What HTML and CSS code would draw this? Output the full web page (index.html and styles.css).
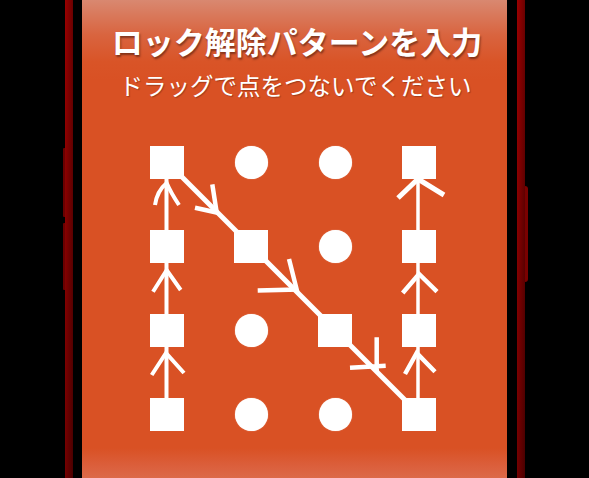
FILE: index.html
```html
<!DOCTYPE html>
<html lang="ja">
<head>
<meta charset="utf-8">
<title>ロック解除パターンを入力</title>
<link rel="stylesheet" href="styles.css">
</head>
<body>
<div class="device">
  <div class="rail rail-left"></div>
  <div class="gap gap-left"></div>
  <main class="screen">
    <h1 class="title">ロック解除パターンを入力</h1>
    <p class="subtitle">ドラッグで点をつないでください</p>
    <div class="pattern">
      <div class="dots">
        <span class="dot square"></span><span class="dot circle"></span><span class="dot circle"></span><span class="dot square"></span>
        <span class="dot square"></span><span class="dot square"></span><span class="dot circle"></span><span class="dot square"></span>
        <span class="dot square"></span><span class="dot circle"></span><span class="dot square"></span><span class="dot square"></span>
        <span class="dot square"></span><span class="dot circle"></span><span class="dot circle"></span><span class="dot square"></span>
      </div>
      <svg class="trace" width="336" height="336" viewBox="0 0 336 336" aria-hidden="true">
        <g fill="none" stroke="#fff" stroke-linecap="butt" stroke-linejoin="miter">
          <line x1="41.5" y1="42" x2="41.5" y2="294" stroke-width="4"/>
          <line x1="293" y1="42" x2="293" y2="294" stroke-width="3.5"/>
          <line x1="42" y1="42" x2="294" y2="294" stroke-width="5"/>
          <path d="M30,85 Q32,71 41.7,63 Q46,73 54,85" stroke-width="4"/>
          <path d="M28,171.7 L41.7,150 L55.7,170" stroke-width="4"/>
          <path d="M26.7,255 L41,233 L59,253" stroke-width="4"/>
          <path d="M273,78 L293,59 L319,75" stroke-width="5"/>
          <path d="M277.7,173 L294,154 L312,171.7" stroke-width="4.5"/>
          <path d="M280,254 L291.7,233 L310,251.7" stroke-width="4.5"/>
          <path d="M87.3,64.3 L91.7,92.5 L70,87.7" stroke-width="4.5"/>
          <path d="M164,139 L171.7,169.5 L132.7,170.5" stroke-width="4.5"/>
          <path d="M251.7,217.3 L251.7,251.7 M225,247.7 L260.7,245.7" stroke-width="4.5"/>
        </g>
      </svg>
    </div>
  </main>
  <div class="gap gap-right"></div>
  <div class="rail rail-right"></div>
</div>
</body>
</html>
```

FILE: styles.css
```css
html, body {
  margin: 0;
  padding: 0;
  background: #000;
}

body {
  width: 589px;
  height: 478px;
  overflow: hidden;
}

.device {
  display: flex;
  height: 478px;
  padding-left: 65px;
}

.rail {
  position: relative;
  width: 8px;
  background:
    linear-gradient(to right, rgba(255, 0, 0, 0.12), rgba(0, 0, 0, 0.25)),
    linear-gradient(to bottom, #8e0000, #620000);
}

.rail-left::before,
.rail-left::after {
  content: "";
  position: absolute;
  left: -2px;
  width: 2px;
  background: #6a0000;
  border-radius: 1px 0 0 1px;
}

.rail-left::before {
  top: 148px;
  height: 69px;
}

.rail-left::after {
  top: 223px;
  height: 67px;
}

.rail-right::after {
  content: "";
  position: absolute;
  left: 8px;
  top: 186px;
  width: 3px;
  height: 96px;
  background: #7a0000;
  border-radius: 0 3px 3px 0;
}

.gap-left {
  width: 9px;
}

.gap-right {
  width: 10px;
}

.screen {
  width: 425px;
  height: 478px;
  display: flex;
  flex-direction: column;
  align-items: center;
  background: linear-gradient(to bottom,
    #d98870 0px,
    #d9643f 35px,
    #d95427 62px,
    #d95124 80px,
    #d95124 448px,
    #db5f3c 466px,
    #dc6a49 478px);
  font-family: "Noto Sans CJK JP", "Noto Sans", sans-serif;
  color: #fff;
}

.title {
  margin: 0;
  padding: 25px 0 0 5px;
  font-size: 31px;
  line-height: 31px;
  font-weight: 700;
  white-space: nowrap;
  text-shadow: 1px 2px 2px rgba(60, 20, 10, 0.55);
}

.subtitle {
  margin: 17px 0 0;
  padding-left: 2px;
  font-size: 23.5px;
  line-height: 24px;
  font-weight: 400;
  white-space: nowrap;
  text-shadow: 1px 1px 1px rgba(60, 20, 10, 0.35);
}

.pattern {
  position: relative;
  align-self: flex-start;
  margin: 23px 0 0 43px;
  width: 336px;
  height: 336px;
}

.dots {
  display: grid;
  grid-template-columns: repeat(4, 84px);
  grid-template-rows: repeat(4, 84px);
  place-items: center;
}

.dot {
  display: block;
  background: #fff;
}

.square {
  width: 34px;
  height: 33px;
}

.circle {
  width: 33px;
  height: 33px;
  border-radius: 50%;
  box-shadow: 0 0 1px rgba(255, 255, 255, 0.8);
}

.trace {
  position: absolute;
  left: 0;
  top: 0;
  overflow: visible;
}
```
